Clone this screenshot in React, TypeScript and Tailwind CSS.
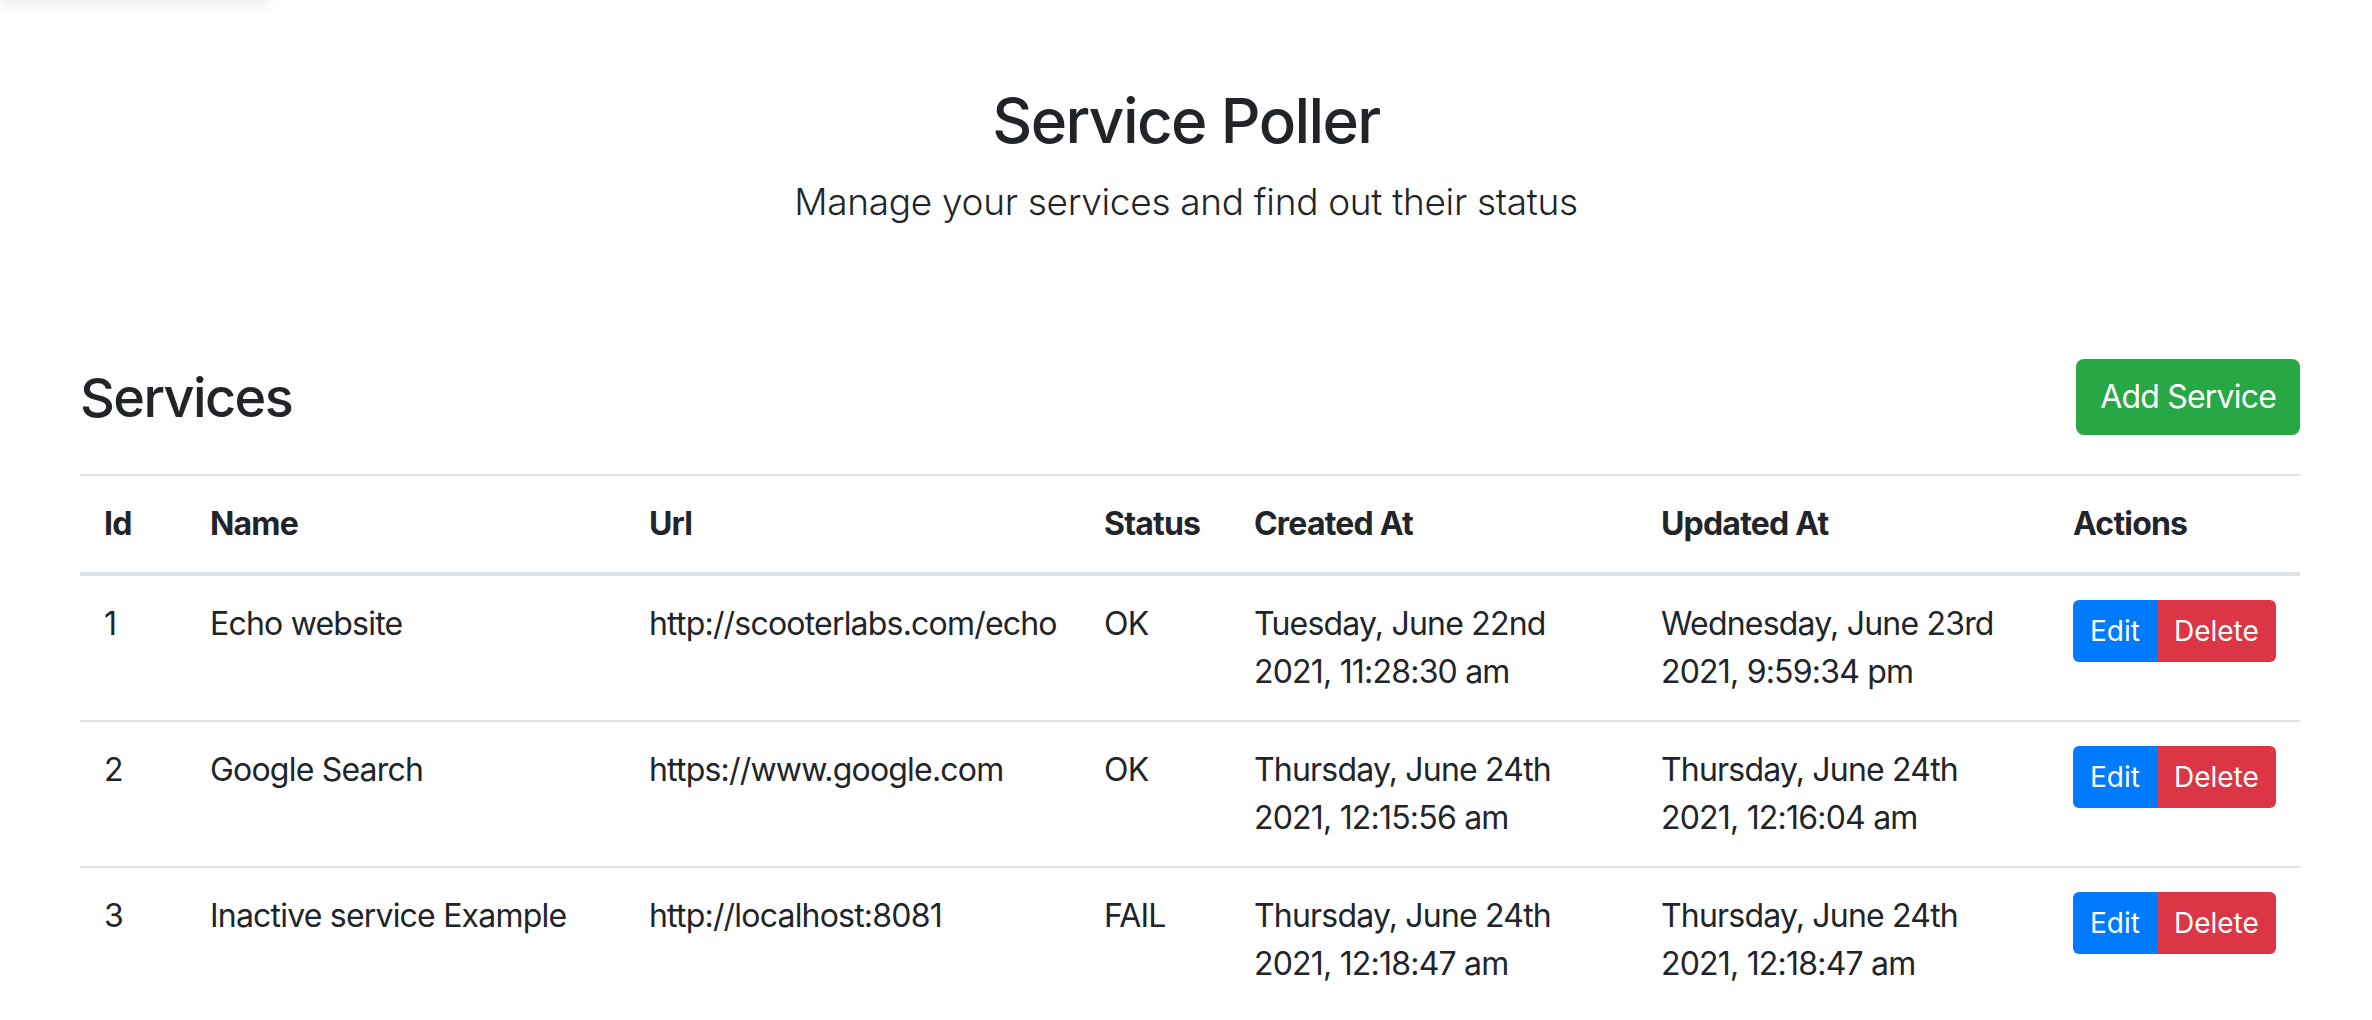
import React from "react";

type Service = {
  id: number;
  name: string;
  url: string;
  status: string;
  createdAt: [string, string];
  updatedAt: [string, string];
};

const services: Service[] = [
  {
    id: 1,
    name: "Echo website",
    url: "http://scooterlabs.com/echo",
    status: "OK",
    createdAt: ["Tuesday, June 22nd", "2021, 11:28:30 am"],
    updatedAt: ["Wednesday, June 23rd", "2021, 9:59:34 pm"],
  },
  {
    id: 2,
    name: "Google Search",
    url: "https://www.google.com",
    status: "OK",
    createdAt: ["Thursday, June 24th", "2021, 12:15:56 am"],
    updatedAt: ["Thursday, June 24th", "2021, 12:16:04 am"],
  },
  {
    id: 3,
    name: "Inactive service Example",
    url: "http://localhost:8081",
    status: "FAIL",
    createdAt: ["Thursday, June 24th", "2021, 12:18:47 am"],
    updatedAt: ["Thursday, June 24th", "2021, 12:18:47 am"],
  },
];

const cell = "px-[24px] py-[24px] align-top text-left";

export default function App() {
  return (
    <div
      className="relative min-h-screen bg-white text-[#212529] text-[32px] leading-[48px] tracking-[-0.8px] overflow-hidden"
      style={{ fontFamily: "Inter, 'Noto Sans', sans-serif" }}
    >
      {/* faint shadow of something sitting above the viewport */}
      <div className="absolute left-0 top-[-40px] w-[270px] h-[40px] bg-white shadow-[0_4px_14px_rgba(0,0,0,0.08)]" />

      <header className="pt-[82px] text-center">
        <h1 className="text-[62px] leading-[77px] font-medium tracking-[-1.6px]">Service Poller</h1>
        <p className="mt-[14px] text-[37px] leading-[57px] font-light tracking-[-0.3px]">
          Manage your services and find out their status
        </p>
      </header>

      <main className="ml-[80px] w-[2220px] mt-[129px]">
        <div className="flex items-center justify-between h-[76px]">
          <h3 className="text-[54px] leading-[67px] font-medium tracking-[-1.6px]">Services</h3>
          <button className="h-[76px] px-[24px] rounded-[8px] bg-[#28a745] text-white text-[32px] leading-[48px]">
            Add Service
          </button>
        </div>

        <table className="mt-[39px] w-full table-fixed border-collapse">
          <colgroup>
            <col className="w-[106px]" />
            <col className="w-[439px]" />
            <col className="w-[455px]" />
            <col className="w-[150px]" />
            <col className="w-[407px]" />
            <col className="w-[412px]" />
            <col className="w-[251px]" />
          </colgroup>
          <thead>
            <tr className="border-t-2 border-b-4 border-[#dee2e6]">
              {["Id", "Name", "Url", "Status", "Created At", "Updated At", "Actions"].map((h) => (
                <th key={h} className={`${cell} font-bold`}>
                  {h}
                </th>
              ))}
            </tr>
          </thead>
          <tbody>
            {services.map((s) => (
              <tr key={s.id} className="border-b-2 border-[#dee2e6] last:border-b-0">
                <td className={cell}>{s.id}</td>
                <td className={cell}>{s.name}</td>
                <td className={`${cell} whitespace-nowrap`}>{s.url}</td>
                <td className={cell}>{s.status}</td>
                <td className={`${cell} whitespace-nowrap`}>
                  {s.createdAt[0]}
                  <br />
                  {s.createdAt[1]}
                </td>
                <td className={`${cell} whitespace-nowrap`}>
                  {s.updatedAt[0]}
                  <br />
                  {s.updatedAt[1]}
                </td>
                <td className={cell}>
                  <div className="flex tracking-normal">
                    <button className="h-[62px] px-[17px] rounded-l-[6px] bg-[#007bff] text-white text-[28px] leading-[42px]">
                      Edit
                    </button>
                    <button className="h-[62px] px-[17px] rounded-r-[6px] bg-[#dc3545] text-white text-[28px] leading-[42px]">
                      Delete
                    </button>
                  </div>
                </td>
              </tr>
            ))}
          </tbody>
        </table>
      </main>
    </div>
  );
}
